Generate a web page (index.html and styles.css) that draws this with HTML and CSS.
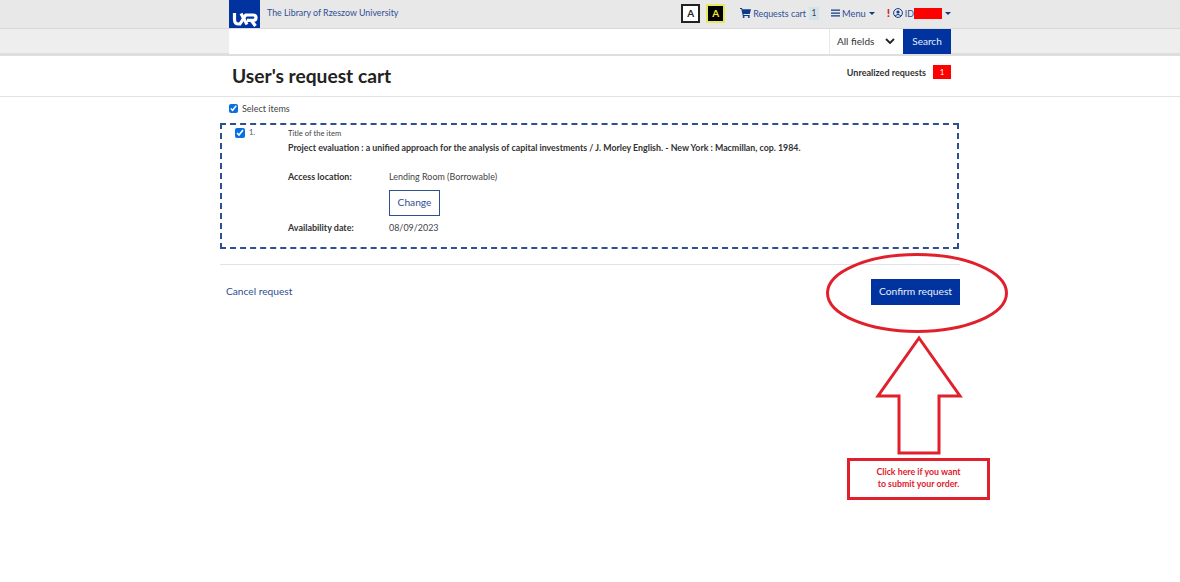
FILE: index.html
```html
<!DOCTYPE html>
<html lang="en">
<head>
<meta charset="utf-8">
<title>User's request cart</title>
<link rel="stylesheet" href="styles.css">
</head>
<body>
<header class="topbar">
  <div class="wrap topbar-inner">
    <a class="brand">
      <span class="logo"><svg width="31" height="28" viewBox="0 0 31 28"><rect width="31" height="28" fill="#0033a0"/><g fill="none" stroke="#fff" stroke-width="3.200"><path d="M5.500 13v6.500q0 4.500 4 4.500h2.500"/><path d="M11 24l6-9.500"/><path d="M12 13.500l6 11"/><path d="M16 15h8q3 0 3 2.700t-3 2.700h-6"/><path d="M22 20l4.500 6"/></g></svg></span>
      <span class="brand-name">The Library of Rzeszow University</span>
    </a>
    <div class="top-actions">
      <span class="contrast contrast-w">A</span>
      <span class="contrast contrast-y">A</span>
      <a class="nav cart-link">
        <svg class="cart" width="11" height="10" viewBox="0 0 11 10"><path d="M0 0h2l.4 1.300H11l-1.200 4.700H3.500l.2 1h6v1H2.800L1.300 1H0z" fill="#0e3a8c"/><circle cx="3.600" cy="9" r="1" fill="#0e3a8c"/><circle cx="8.800" cy="9" r="1" fill="#0e3a8c"/></svg>
        Requests cart <span class="count">1</span>
      </a>
      <a class="nav menu-link">
        <svg width="9" height="8" viewBox="0 0 9 8"><path d="M0 .5h9v1.300H0zM0 3.400h9v1.300H0zM0 6.300h9v1.300H0z" fill="#0e3a8c"/></svg>
        <span class="menu-text">Menu</span> <span class="caret"></span>
      </a>
      <a class="nav user-link">
        <span class="alert">!</span>
        <svg width="10" height="10" viewBox="0 0 10 10"><circle cx="5" cy="5" r="4.400" fill="none" stroke="#0e3a8c"/><circle cx="5" cy="4" r="1.600" fill="#0e3a8c"/><path d="M2.300 7.600q2.700-2.400 5.400 0" fill="none" stroke="#0e3a8c"/></svg>
        <span>ID</span><span class="redact"></span><span class="caret"></span>
      </a>
    </div>
  </div>
</header>
<div class="searchbar">
  <div class="wrap search-inner">
    <div class="search-input"></div>
    <div class="search-select">All fields
      <svg width="10" height="7" viewBox="0 0 10 7"><path d="M1 1l4 4 4-4" fill="none" stroke="#222" stroke-width="1.800"/></svg>
    </div>
    <div class="search-btn">Search</div>
  </div>
</div>
<div class="titleband">
  <div class="wrap title-inner">
    <h1>User's request cart</h1>
    <div class="unrealized">Unrealized requests <span class="badge">1</span></div>
  </div>
</div>
<main class="main">
  <label class="select-all"><input type="checkbox" class="check-sm" checked> Select items</label>
  <section class="item">
    <div class="item-mark"><input type="checkbox" class="check-lg" checked><span class="num">1.</span></div>
    <div class="item-body">
      <div class="field-label">Title of the item</div>
      <div class="item-title">Project evaluation : a unified approach for the analysis of capital investments / J. Morley English. - New York : Macmillan, cop. 1984.</div>
      <div class="meta">
        <div class="meta-key">Access location:</div>
        <div class="meta-val">Lending Room (Borrowable)<a class="change">Change</a></div>
        <div class="meta-key">Availability date:</div>
        <div class="meta-val">08/09/2023</div>
      </div>
    </div>
  </section>
  <div class="actions">
    <a class="cancel">Cancel request</a>
    <a class="confirm">Confirm request</a>
  </div>
</main>
<svg class="annotation" width="184" height="206" viewBox="0 0 184 206">
  <ellipse cx="91" cy="43" rx="89.500" ry="38.500" fill="none" stroke="#e0202c" stroke-width="3"/>
  <path d="M93 88L134 146H113V203H73V146H52z" fill="none" stroke="#e0202c" stroke-width="3"/>
</svg>
<div class="note">Click here if you want<br>to submit your order.</div>
</body>
</html>
```
FILE: styles.css
```css
* { box-sizing: border-box; }
html, body { margin: 0; padding: 0; }
body { position: relative; height: 582px; overflow: hidden; background: #fff; font-family: Lato, "Liberation Sans", sans-serif; font-size: 9.5px; color: #333; }
.wrap { width: 722px; margin-left: 229px; }
.topbar { height: 29px; background: #e8e8e8; border-bottom: 1px solid #d8d8d8; }
.topbar-inner { display: flex; justify-content: space-between; height: 28px; }
.brand { display: flex; align-items: flex-start; gap: 7px; color: #2f4f95; }
.logo { display: block; width: 31px; height: 28px; }
.logo svg { display: block; }
.brand-name { font-size: 8.850px; line-height: 26px; }
.top-actions { display: flex; align-items: center; height: 26px; color: #2f4f95; font-size: 8.900px; }
.contrast { display: block; width: 19px; height: 19px; margin-right: 6px; text-align: center; font-size: 10px; font-weight: 700; line-height: 15px; }
.contrast-w { background: #fff; border: 2px solid #222; color: #222; }
.contrast-y { background: #000; border: 2px solid #e8e85c; color: #f2e830; margin-right: 15px; }
.nav { display: flex; align-items: center; gap: 2px; white-space: nowrap; }
.cart-link { margin-right: 12px; }
.count { display: inline-block; background: #d4e2ec; color: #444; width: 10px; height: 13px; margin-left: 1px; font-size: 8.500px; line-height: 12px; text-align: center; }
.menu-link { margin-right: 12px; }
.menu-text { font-size: 9.300px; }
.caret { width: 0; height: 0; border-left: 3px solid transparent; border-right: 3px solid transparent; border-top: 3px solid #0e3a8c; margin-left: 1px; }
.alert { color: #c9302c; font-size: 12px; font-weight: 900; line-height: 12px; width: 4px; }
.user-link { gap: 2px; }
.redact { display: block; width: 28px; height: 11px; margin-left: -2px; background: #f00; }
.searchbar { height: 27px; background: #eee; border-bottom: 3px solid #dedede; }
.search-inner { display: flex; height: 25px; }
.search-input { flex: 1; background: #fff; }
.search-select { width: 74px; background: #fff; display: flex; align-items: center; justify-content: space-between; padding: 0 8px 1px 7px; font-size: 10px; color: #333; border-left: 1px solid #e8e8e8; }
.search-btn { width: 48px; background: #0033a0; color: #e8eefa; font-size: 10px; line-height: 24px; text-align: center; }
.titleband { height: 41px; border-bottom: 1px solid #e3e3e3; }
.title-inner { display: flex; justify-content: space-between; position: relative; }
h1 { margin: 0; padding-left: 3px; padding-top: 8px; font-size: 19.200px; line-height: 24px; font-weight: 700; color: #222; }
.unrealized { display: flex; align-items: flex-start; gap: 7px; padding-top: 9px; font-size: 9px; font-weight: 700; line-height: 16px; color: #333; }
.badge { display: block; width: 18px; height: 14px; background: #f00; color: #fff; font-size: 8px; font-weight: 400; line-height: 14px; text-align: center; }
.main { width: 739px; margin-left: 220px; }
.select-all { display: flex; align-items: center; gap: 4px; height: 26px; padding: 0 0 3px 9px; font-size: 9px; color: #444; }
input[type=checkbox] { margin: 0; accent-color: #0a6fe0; }
.check-sm { width: 9px; height: 9px; }
.check-lg { width: 10px; height: 10px; }
.item { display: flex; height: 126px; border: 2px dashed #2f4f95; padding: 3px 0 0 13px; }
.item-mark { width: 53px; display: flex; align-items: flex-start; gap: 4px; }
.num { font-size: 7.500px; line-height: 10px; color: #555; }
.item-body { flex: 1; }
.field-label { font-size: 7.600px; line-height: 11px; color: #444; }
.item-title { margin-top: 2px; font-size: 8.820px; font-weight: 700; line-height: 14px; color: #333; white-space: nowrap; }
.meta { display: grid; grid-template-columns: 101px 1fr; margin-top: 15px; font-size: 8.950px; line-height: 14px; }
.meta-key { font-weight: 700; color: #333; }
.meta-val { color: #444; }
.meta-key:nth-child(3), .meta-val:nth-child(4) { margin-top: 5px; }
.change { display: block; width: 51px; height: 26px; margin-top: 6px; border: 1px solid #2f4f95; color: #2f4f95; font-size: 10.200px; line-height: 23px; text-align: center; }
.actions { display: flex; justify-content: space-between; align-items: flex-start; margin-top: 15px; margin-right: -1px; border-top: 1px solid #e3e3e3; padding: 14px 0 0 6px; }
.cancel { margin-top: 5px; font-size: 10.200px; line-height: 14px; color: #2f4f95; }
.confirm { display: block; width: 89px; height: 26px; background: #0033a0; color: #e8eefa; font-size: 10.300px; line-height: 25px; text-align: center; }
.annotation { position: absolute; left: 826px; top: 250px; }
.note { position: absolute; left: 847px; top: 458px; width: 143px; height: 42px; border: 3px solid #e0202c; padding-top: 5px; text-align: center; color: #e0202c; font-size: 8.800px; font-weight: 700; line-height: 12px; }
```
